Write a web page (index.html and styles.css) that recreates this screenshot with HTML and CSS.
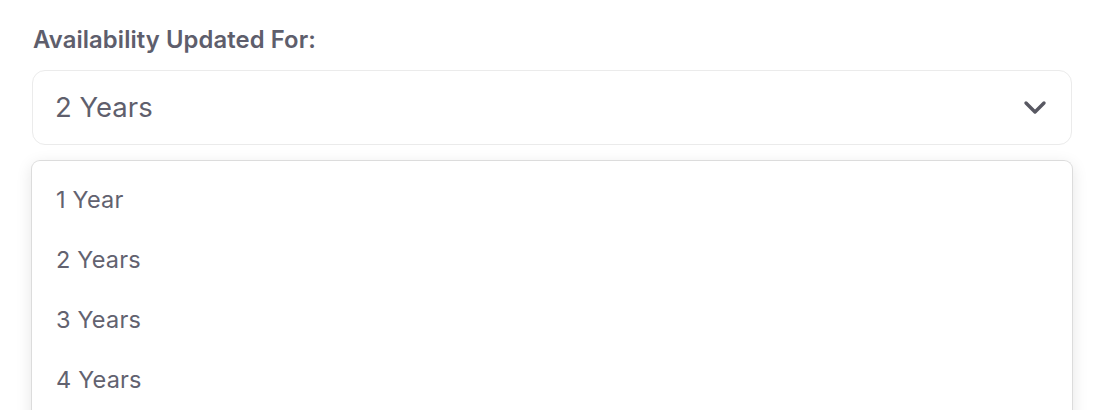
FILE: index.html
```html
<!DOCTYPE html>
<html>
<head>
<meta charset="utf-8">
<link rel="stylesheet" href="styles.css">
</head>
<body>
<div class="field">
  <label class="label">Availability Updated For:</label>
  <div class="select">
    <span class="value">2 Years</span>
    <svg class="chevron" width="24" height="16" viewBox="0 0 24 16"><path d="M3 3 L12 12 L21 3" fill="none" stroke="#585862" stroke-width="3.4" stroke-linecap="round" stroke-linejoin="round"/></svg>
  </div>
  <ul class="menu">
    <li class="option">1 Year</li>
    <li class="option">2 Years</li>
    <li class="option">3 Years</li>
    <li class="option">4 Years</li>
  </ul>
</div>
</body>
</html>
```
FILE: styles.css
```css
html, body {
  margin: 0;
  padding: 0;
  background: #ffffff;
  overflow: hidden;
}
body {
  font-family: Inter, "Noto Sans", sans-serif;
  height: 410px;
}
.field {
  padding: 25px 32px 0 32px;
  display: flex;
  flex-direction: column;
}
.label {
  font-size: 23.8px;
  font-weight: 600;
  color: #5e5e6c;
  line-height: 29px;
  padding-left: 1px;
  letter-spacing: 0.1px;
}
.select {
  margin-top: 16px;
  height: 75px;
  border: 1.5px solid #ebebeb;
  border-radius: 13px;
  display: flex;
  align-items: center;
  justify-content: space-between;
  padding: 0 24px 0 22px;
  box-sizing: border-box;
}
.value {
  font-size: 27.5px;
  color: #5f5f6d;
  margin-top: -2px;
}
.chevron {
  display: block;
}
.menu {
  list-style: none;
  margin: 15px -1px 0 -1px;
  padding: 9px 0 0 0;
  border: 1.5px solid #dcdcdc;
  border-bottom: none;
  border-radius: 9px 9px 0 0;
  box-shadow: 0 4px 16px rgba(0,0,0,0.10);
  height: 260px;
}
.option {
  height: 60px;
  line-height: 60px;
  padding-left: 24px;
  font-size: 23.5px;
  color: #62626f;
  letter-spacing: 0.2px;
}
```
